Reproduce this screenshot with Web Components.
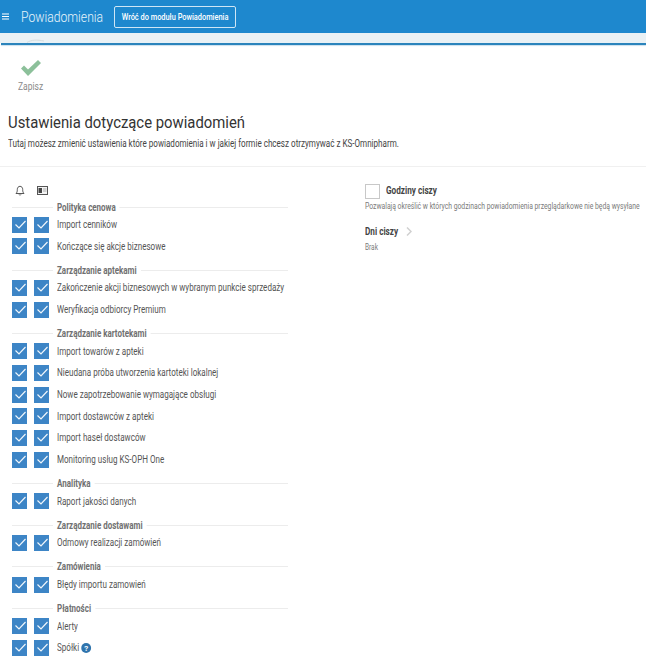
<!DOCTYPE html>
<html lang="pl"><head><meta charset="utf-8"><style>
html,body{margin:0;padding:0;height:663px;overflow:hidden;background:#fff;font-family:Roboto,"Liberation Sans",sans-serif}
</style></head><body>
<app-page></app-page>
<script>
const el=(name,html,extra)=>customElements.define(name,class extends HTMLElement{constructor(){super();this.attachShadow({mode:'open'}).innerHTML=html}
connectedCallback(){if(extra)extra.call(this)}});
el('app-header',`<style>
:host{display:flex;align-items:center;height:33px;background:#1e88ce;color:#fff;box-sizing:border-box;padding-left:2px}
svg{display:block;width:7px;height:7px;margin-right:12px;flex:none}
.t{font-size:14px;font-weight:300;color:#e8f4fb;width:82px;margin-right:11px;flex:none;white-space:nowrap;transform:scaleX(.87);transform-origin:left;display:block}
.b{box-sizing:border-box;height:22px;width:122px;border:1px solid #cfe6f5;border-radius:2px;display:flex;align-items:center;justify-content:center;flex:none}
.b span{font-size:9px;font-weight:500;white-space:nowrap;color:#fff;transform:scaleX(.82)}
</style><svg viewBox="0 0 7 7"><path d="M0 1h7M0 3.500h7M0 6h7" stroke="#fff" stroke-width="1.100"/></svg><span class="t">Powiadomienia</span><div class="b"><span>Wróć do modułu Powiadomienia</span></div>`);
el('save-button',`<style>
:host{display:flex;flex-direction:column;align-items:flex-start;padding:15px 0 0 18px;height:47px}
svg{display:block;width:20px;height:16px;margin-left:3px}
span{font-size:10px;color:#8a8a8a;margin-top:5px;line-height:12px;transform:scaleX(.85);transform-origin:left}
</style><svg viewBox="0 0 20 16"><path d="M0 8.500l3-3 4 4L17 0l3 3L7 16z" fill="#8cc09a"/></svg><span>Zapisz</span>`);
el('check-box',`<style>
:host{display:block;width:15px;height:16px;background:#3d85c6;flex:none}
svg{display:block;width:15px;height:16px}
</style><svg viewBox="0 0 15 16"><path d="M3.500 7.500l3.500 3.500L13.500 4" fill="none" stroke="#f0f6fb" stroke-width="1.200"/></svg>`);
el('setting-row',`<style>
:host{display:flex;align-items:center;height:21.7px;font-size:10px;color:#555}
.c{display:flex;gap:7px;margin-left:12px;margin-right:8px;flex:none}
.s{display:flex;align-items:center;gap:3px;white-space:nowrap;transform:scaleX(.805);transform-origin:left}
</style><div class="c"><check-box></check-box><check-box></check-box></div><div class="s"><slot></slot></div>`);
el('setting-group',`<style>
:host{display:block;margin-bottom:6.45px}
.h{height:13.5px;margin-left:12px;width:276px;background:linear-gradient(#ececec,#ececec) 0 50%/100% 1px no-repeat;display:flex;align-items:center}
.h span{font-size:10px;font-weight:700;color:#707070;background:#fff;margin-left:41px;padding:0 5px;white-space:nowrap;line-height:13px;transform:scaleX(.8);transform-origin:left}
</style><div class="h"><span id="t"></span></div><slot></slot>`,function(){this.shadowRoot.getElementById('t').textContent=this.getAttribute('label')});
el('channel-icons',`<style>
:host{display:flex;align-items:center;gap:12px;margin-left:15px;height:16px;margin-bottom:2.25px}
svg{display:block}
</style><svg width="10" height="11" viewBox="0 0 10 11" fill="none" stroke="#444" stroke-width=".9"><path d="M1 8.500c1-1 1.300-2 1.300-4C2.300 2.600 3.400 1.300 5 1.300S7.700 2.600 7.700 4.500c0 2 .3 3 1.300 4z"/><path d="M4 9.500c.3.8 1.700.8 2 0"/></svg><svg width="11" height="9" viewBox="0 0 11 9"><rect x=".5" y=".5" width="10" height="8" fill="#f4f4f4" stroke="#555"/><rect x="1.500" y="2" width="3.500" height="3" fill="#444"/><rect x="1.500" y="5" width="3.500" height="2" fill="#444"/><path d="M6 3h3.500M6 5h3.500" stroke="#aaa"/></svg>`);
el('quiet-panel',`<style>
:host{display:block;width:281px;padding-top:2px}
.top{display:flex;align-items:center;gap:6px}
.box{width:15px;height:15px;border:1px solid #c8c8c8;box-sizing:border-box;flex:none}
b{display:block;font-size:10px;font-weight:700;color:#444;white-space:nowrap;transform:scaleX(.82);transform-origin:left}
.top b{margin-top:-3px}
p{font-size:8.500px;color:#7a7a7a;margin:1.500px 0 0;line-height:11px;white-space:nowrap;transform:scaleX(.8);transform-origin:left}
.d{display:flex;align-items:center;gap:1px;margin-top:12.500px;height:14px}
svg{display:block}
.k{font-size:9px;color:#7a7a7a;margin-top:3.500px;line-height:11px;transform:scaleX(.72);transform-origin:left}
</style><div class="top"><div class="box"></div><b>Godziny ciszy</b></div>
<p>Pozwalają określić w których godzinach powiadomienia przeglądarkowe nie będą wysyłane</p>
<div class="d"><b>Dni ciszy</b><svg width="6" height="9" viewBox="0 0 6 9"><path d="M1 .5l4 4-4 4" fill="none" stroke="#d0d0d0" stroke-width="1.500"/></svg></div>
<div class="k">Brak</div>`);
el('help-icon',`<style>:host{display:block;width:12.400px;height:10px;flex:none}svg{display:block;width:12.400px;height:10px}text{font:700 8px Roboto,sans-serif}</style><svg viewBox="0 0 10 10" preserveAspectRatio="none"><circle cx="5" cy="5" r="5" fill="#2f74ad"/><text x="5" y="8" text-anchor="middle" fill="#fff">?</text></svg>`);
el('app-page',`<style>
:host{display:block}
.strip{height:10px;background:#e9f1f5;display:flex;align-items:flex-end;padding-left:27px;box-sizing:border-box}
.strip svg{display:block}
.line{height:2px;background:#2b84bc;margin-left:1px;box-shadow:0 1px 1px rgba(43,132,188,.25)}
h1{font-size:17px;font-weight:400;color:#333;margin:3px 0 0 8px;line-height:24px;white-space:nowrap;transform:scaleX(.874);transform-origin:left}
.sub{font-size:10px;color:#444;margin:4px 0 0 8px;line-height:12px;white-space:nowrap;transform:scaleX(.807);transform-origin:left}
hr{border:0;border-top:1px solid #f0f0f0;margin:16px 0 0}
.cols{display:flex;padding-top:15px}
.l{width:365px;flex:none}
</style>
<app-header></app-header><div class="strip"><svg width="18" height="4" viewBox="0 0 18 4"><path d="M0 3.500C4 .8 10 .5 17 2" fill="none" stroke="#d5dde0"/></svg></div><div class="line"></div>
<save-button></save-button>
<h1>Ustawienia dotyczące powiadomień</h1>
<p class="sub">Tutaj możesz zmienić ustawienia które powiadomienia i w jakiej formie chcesz otrzymywać z KS-Omnipharm.</p>
<hr>
<div class="cols"><div class="l">
<channel-icons></channel-icons>
<setting-group label="Polityka cenowa"><setting-row>Import cenników</setting-row><setting-row>Kończące się akcje biznesowe</setting-row></setting-group>
<setting-group label="Zarządzanie aptekami"><setting-row>Zakończenie akcji biznesowych w wybranym punkcie sprzedaży</setting-row><setting-row>Weryfikacja odbiorcy Premium</setting-row></setting-group>
<setting-group label="Zarządzanie kartotekami"><setting-row>Import towarów z apteki</setting-row><setting-row>Nieudana próba utworzenia kartoteki lokalnej</setting-row><setting-row>Nowe zapotrzebowanie wymagające obsługi</setting-row><setting-row>Import dostawców z apteki</setting-row><setting-row>Import haseł dostawców</setting-row><setting-row>Monitoring usług KS-OPH One</setting-row></setting-group>
<setting-group label="Analityka"><setting-row>Raport jakości danych</setting-row></setting-group>
<setting-group label="Zarządzanie dostawami"><setting-row>Odmowy realizacji zamówień</setting-row></setting-group>
<setting-group label="Zamówienia"><setting-row>Błędy importu zamowień</setting-row></setting-group>
<setting-group label="Płatności"><setting-row>Alerty</setting-row><setting-row>Spółki <help-icon></help-icon></setting-row></setting-group>
</div><quiet-panel></quiet-panel></div>`);
</script></body></html>
